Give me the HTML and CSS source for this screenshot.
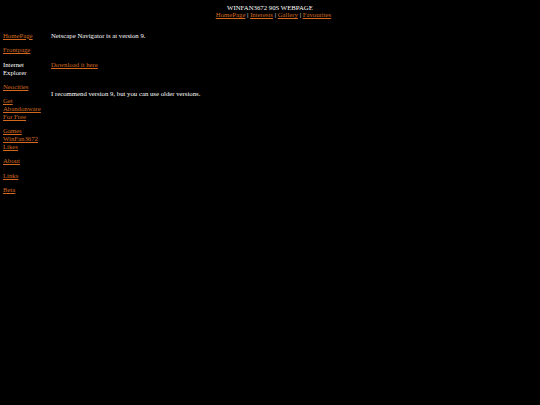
FILE: index.html
```html
<!DOCTYPE html>
<html>
<head>
<meta charset="utf-8">
<title>WINFAN3672 90S WEBPAGE</title>
<link rel="stylesheet" href="styles.css">
</head>
<body>
<header class="top">
  <div class="title">WINFAN3672 90S WEBPAGE</div>
  <nav class="nav"><a href="#">HomePage</a> | <a href="#">Interests</a> | <a href="#">Gallery</a> | <a href="#">Favourites</a></nav>
</header>
<div class="layout">
  <aside class="side">
    <p><a href="#">HomePage</a></p>
    <p><a href="#">Frontpage</a></p>
    <p>Internet<br>Explorer</p>
    <p><a href="#">Neocities</a></p>
    <p><a href="#">Get<br>Abandonware<br>For Free</a></p>
    <p><a href="#">Games<br>WinFan3672<br>Likes</a></p>
    <p><a href="#">About</a></p>
    <p><a href="#">Links</a></p>
    <p><a href="#">Beta</a></p>
  </aside>
  <main class="content">
    <p>Netscape Navigator is at version 9.</p>
    <p class="gap"><a href="#">Download it here</a></p>
    <p class="gap">I recommend version 9, but you can use older versions.</p>
  </main>
</div>
</body>
</html>
```
FILE: styles.css
```css
html, body {
  background: #000;
}
body {
  margin: 3px;
  color: #fff;
  font-family: "Liberation Serif", "Times New Roman", serif;
  font-size: 6.75px;
  line-height: 7.7px;
}
a {
  color: #d2691e;
}
.top {
  text-align: center;
  padding-top: 0.5px;
}
.nav {
  padding-left: 7px;
}
.layout {
  display: grid;
  grid-template-columns: 48px 1fr;
  margin-top: 13px;
}
.side p, .content p {
  margin: 0 0 6.75px 0;
}
.content .gap {
  margin-top: 21.3px;
}
```
